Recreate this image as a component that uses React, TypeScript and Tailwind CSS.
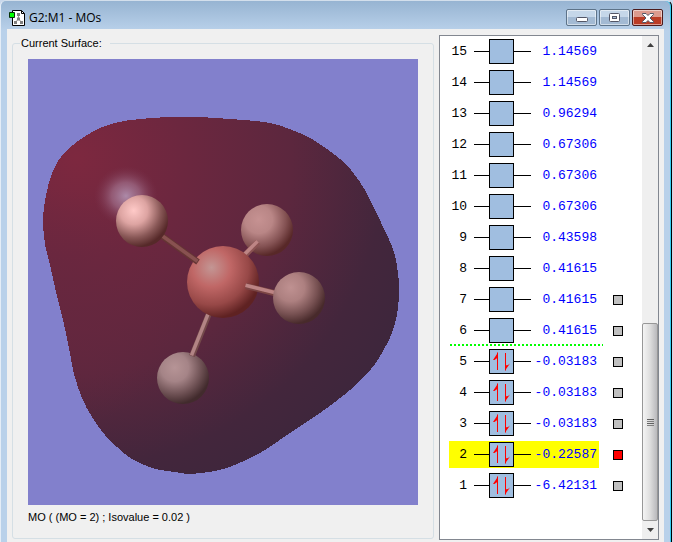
import { useState } from 'react';

type Orbital = {
  id: number;
  energy: string;
  occupied?: boolean;
  selectable?: boolean;
};

const ORBITALS: Orbital[] = [
  { id: 15, energy: '1.14569' },
  { id: 14, energy: '1.14569' },
  { id: 13, energy: '0.96294' },
  { id: 12, energy: '0.67306' },
  { id: 11, energy: '0.67306' },
  { id: 10, energy: '0.67306' },
  { id: 9, energy: '0.43598' },
  { id: 8, energy: '0.41615' },
  { id: 7, energy: '0.41615', selectable: true },
  { id: 6, energy: '0.41615', selectable: true },
  { id: 5, energy: '-0.03183', occupied: true, selectable: true },
  { id: 4, energy: '-0.03183', occupied: true, selectable: true },
  { id: 3, energy: '-0.03183', occupied: true, selectable: true },
  { id: 2, energy: '-0.22587', occupied: true, selectable: true },
  { id: 1, energy: '-6.42131', occupied: true, selectable: true },
];

const LUMO = 6;

// outline of the isosurface, clockwise from the top
const OUTLINE: [number, number][] = [
  [142, 58], [170, 58], [202, 60], [236, 63], [256, 68], [282, 79], [307, 96], [323, 111],
  [337, 131], [348, 153], [357, 172], [365, 190], [369, 207], [371, 224], [371, 237],
  [369, 256], [364, 274], [355, 292], [343, 310], [322, 331], [292, 354], [262, 374],
  [232, 394], [204, 407], [187, 412], [172, 414], [160, 415], [147, 413], [128, 410],
  [112, 404], [97, 395], [77, 376], [64, 358], [54, 339], [46, 315], [41, 289], [35, 261],
  [28, 233], [22, 206], [17, 185], [15, 160], [18, 136], [25, 112], [38, 92], [64, 73],
  [87, 64], [112, 60],
];

function smoothPath(pts: [number, number][]) {
  const n = pts.length;
  const at = (i: number) => pts[(i + n) % n];
  let d = `M${pts[0][0]} ${pts[0][1]}`;
  for (let i = 0; i < n; i++) {
    const [p0, p1, p2, p3] = [at(i - 1), at(i), at(i + 1), at(i + 2)];
    d += `C${p1[0] + (p2[0] - p0[0]) / 6} ${p1[1] + (p2[1] - p0[1]) / 6} `;
    d += `${p2[0] - (p3[0] - p1[0]) / 6} ${p2[1] - (p3[1] - p1[1]) / 6} ${p2[0]} ${p2[1]}`;
  }
  return d + 'Z';
}

function Ball({ id, cx, cy, r, stops }: { id: string; cx: number; cy: number; r: number; stops: string[] }) {
  return (
    <>
      <radialGradient id={id} cx="0.34" cy="0.3" r="0.74">
        <stop offset="0" stopColor={stops[0]} />
        <stop offset="0.36" stopColor={stops[1]} />
        <stop offset="0.7" stopColor={stops[2]} />
        <stop offset="0.95" stopColor={stops[3]} />
      </radialGradient>
      <circle cx={cx} cy={cy} r={r} fill={`url(#${id})`} />
    </>
  );
}

function Bond({ x1, y1, x2, y2, dark, light }: { x1: number; y1: number; x2: number; y2: number; dark: string; light: string }) {
  return (
    <g>
      <line x1={x1} y1={y1} x2={x2} y2={y2} stroke={dark} strokeWidth="6" />
      <line x1={x1 - 0.5} y1={y1 - 0.7} x2={x2 - 0.5} y2={y2 - 0.7} stroke={light} strokeWidth="3.6" />
    </g>
  );
}

function SurfaceView() {
  return (
    <svg viewBox="0 0 390 446" className="block w-full" role="img" aria-label="Molecular orbital">
      <defs>
        <radialGradient id="shade" gradientUnits="userSpaceOnUse" cx="48" cy="98" r="360">
          <stop offset="0" stopColor="#7d283f" />
          <stop offset="0.3" stopColor="#6c273f" />
          <stop offset="0.6" stopColor="#5c273e" />
          <stop offset="0.86" stopColor="#43263c" />
          <stop offset="1" stopColor="#3e263c" />
        </radialGradient>
        <radialGradient id="rim" gradientUnits="userSpaceOnUse" cx="30" cy="250" r="120">
          <stop offset="0" stopColor="#66273f" stopOpacity="0.7" />
          <stop offset="1" stopColor="#66273f" stopOpacity="0" />
        </radialGradient>
        <radialGradient id="glint">
          <stop offset="0" stopColor="#b395b4" stopOpacity="0.9" />
          <stop offset="0.45" stopColor="#a06f8b" stopOpacity="0.7" />
          <stop offset="1" stopColor="#7a3650" stopOpacity="0" />
        </radialGradient>
      </defs>
      <rect width="390" height="446" fill="#8280cc" />
      <path d={smoothPath(OUTLINE)} fill="url(#shade)" shapeRendering="crispEdges" />
      <path d={smoothPath(OUTLINE)} fill="url(#rim)" shapeRendering="crispEdges" />
      <ellipse cx="98" cy="137" rx="32" ry="30" fill="url(#glint)" />

      <Ball id="h2" cx={239} cy={171} r={26} stops={['#c69292', '#b98686', '#855354', '#582828']} />
      <Bond x1={212} y1={201} x2={230} y2={183} dark="#8b5353" light="#bd8585" />
      <Ball id="h4" cx={155} cy={319} r={26} stops={['#b69496', '#a58487', '#6d5053', '#422b2d']} />
      <Bond x1={182} y1={252} x2={164} y2={297} dark="#73494a" light="#b28485" />
      <Ball id="c" cx={195} cy={223} r={36} stops={['#c39694', '#c06766', '#974847', '#5f2222']} />
      <Bond x1={134} y1={177} x2={170} y2={203} dark="#653534" light="#885150" />
      <Bond x1={218} y1={227} x2={250} y2={235} dark="#7b4544" light="#bc8484" />
      <Ball id="h1" cx={114} cy={162} r={26} stops={['#ffcac8', '#dda4a2', '#895857', '#562929']} />
      <Ball id="h3" cx={271} cy={239} r={26} stops={['#bf9191', '#ad8080', '#765051', '#482a2b']} />
    </svg>
  );
}

function SpinPair() {
  return (
    <svg viewBox="0 0 23 23" className="h-[23px] w-[23px]" fill="#f00">
      <path d="M7 2.500H8V20H7Z" />
      <path d="M8 2.500V7.500L4.500 10H3Z" />
      <path d="M15 3H16V20.500H15Z" />
      <path d="M15 20.500V15.500L18 15L20 13.500Z" />
    </svg>
  );
}

function OrbitalRow({ orbital, selected, onSelect }: { orbital: Orbital; selected: boolean; onSelect: () => void }) {
  const { id, energy, occupied, selectable } = orbital;
  return (
    <li className="flex h-[31px] items-center pl-[9px]">
      <div className={`flex h-[27px] w-[150px] items-center ${selected ? 'bg-[#ffff00]' : ''}`}>
        <label htmlFor={selectable ? `mo-${id}` : undefined} className="w-[18px] text-right text-black">
          {id}
        </label>
        <span className="ml-[7px] h-px w-[15px] bg-black" />
        <span className="h-[25px] w-[25px] border border-black bg-[#a0bee0]">{occupied && <SpinPair />}</span>
        <span className="h-px w-[17px] bg-black" />
        <span className="flex-1 pr-[2px] text-right text-[#0000ff]">{energy}</span>
      </div>
      {selectable && (
        <input
          id={`mo-${id}`}
          type="checkbox"
          checked={selected}
          onChange={onSelect}
          className="ml-[14px] h-[10px] w-[10px] appearance-none border border-black bg-[#c0c0c0] checked:bg-[#ff0000]"
        />
      )}
    </li>
  );
}

function ScrollBar() {
  return (
    <div className="flex w-4 shrink-0 flex-col bg-[#efefef]">
      <button type="button" aria-label="Scroll up" className="flex h-[17px] items-center justify-center">
        <svg viewBox="0 0 7 4" className="h-1 w-[7px]" fill="#404040"><path d="M3.5 0L7 4H0Z" /></svg>
      </button>
      <div className="flex flex-1 flex-col justify-end">
        <div className="flex h-[198px] flex-col items-center justify-center gap-px rounded-[2px] border border-[#979797] bg-linear-to-r from-[#f4f4f4] via-[#dedede] to-[#b9b9bc]">
          <span className="h-px w-[7px] bg-[#606060]" />
          <span className="h-px w-[7px] bg-[#808080]" />
          <span className="h-px w-[7px] bg-[#606060]" />
          <span className="h-px w-[7px] bg-[#808080]" />
        </div>
      </div>
      <button type="button" aria-label="Scroll down" className="flex h-[18px] items-center justify-center">
        <svg viewBox="0 0 7 4" className="h-1 w-[7px]" fill="#404040"><path d="M0 0H7L3.5 4Z" /></svg>
      </button>
    </div>
  );
}

function TitleBar() {
  const button = 'flex h-[17px] w-[31px] items-center justify-center rounded-[2px] border shadow-[inset_0_0_0_1px_rgba(255,255,255,0.5)]';
  const plain = 'border-[#5d7389] bg-linear-to-b from-[#c5d7e9] from-50% to-[#a3bad3] to-50%';
  return (
    <header className="flex h-[28px] items-center pt-[5px] pr-[2px] pl-[2px]">
      <svg viewBox="0 0 16 16" className="h-4 w-4">
        <path d="M3.5 .5H12.5L15.5 3.5V15.5H3.5Z" fill="#fff" stroke="#000" />
        <path d="M12.5 .5V3.5H15.5" fill="none" stroke="#000" />
        <path d="M9.500 5V9L6.500 12M9.500 9L12.500 12" fill="none" stroke="#999" />
        <path d="M8 3H11V6H8ZM8 7.500H11V10.500H8ZM5 11H8V14H5ZM11 11H14V14H11Z" fill="#808080" />
        <path d="M.5 2.500H5.500V7.500H.5Z" fill="#0f0" stroke="#063006" />
      </svg>
      <h1 className="ml-[4px] flex-1 font-['Open_Sans','Noto_Sans',sans-serif] text-[12px] leading-4 text-black">G2:M1 - MOs</h1>
      <div className="flex gap-[2px]">
        <button type="button" aria-label="Minimize" className={`${button} ${plain}`}>
          <svg viewBox="0 0 12 5" className="mt-1 h-[5px] w-3"><rect x=".5" y=".5" width="11" height="4" rx="1" fill="#fff" stroke="#535666" /></svg>
        </button>
        <button type="button" aria-label="Maximize" className={`${button} ${plain}`}>
          <svg viewBox="0 0 11 9" className="h-[9px] w-[11px]">
            <rect x=".5" y=".5" width="10" height="8" rx="1" fill="#fff" stroke="#535666" />
            <rect x="3.500" y="3.500" width="4" height="2" fill="#a9bfd8" stroke="#535666" />
          </svg>
        </button>
        <button type="button" aria-label="Close" className={`${button} border-[#4b1a1c] bg-linear-to-b from-[#dc9a8e] from-45% to-[#bb3c26] to-50%`}>
          <svg viewBox="0 0 12 10" className="h-[10px] w-3">
            <path d="M.5 .5H4L6 2.500L8 .5H11.500V1.500L8 5L11.500 8.500V9.500H8L6 7.500L4 9.500H.5V8.500L4 5L.5 1.500Z" fill="#fff" stroke="#535666" />
          </svg>
        </button>
      </div>
    </header>
  );
}

export default function App() {
  const [selected, setSelected] = useState(2);

  return (
    <div className="min-h-screen bg-[#c9d8ec] pr-px font-['Liberation_Sans',sans-serif]">
      <div className="flex min-h-screen flex-col rounded-t-[6px] border-t border-r border-l border-t-[#d3dfec] border-r-black border-l-[#e4edf7] bg-[#bad2ea] bg-[linear-gradient(#97b4d2,#b9d1ea_30px)] pr-[6px] pl-[6px] shadow-[inset_-1px_0_0_#35cdf2]">
        <TitleBar />
        <main className="mr-px flex flex-1 bg-[#f0f0f0] pt-[6px] pr-[5px] pb-[2px] pl-[5px]">
          <fieldset className="mr-[5px] mb-px min-w-0 flex-1 rounded-[3px] border border-[#d5dfe5] px-[15px]">
            <legend className="-ml-[8px] pr-[8px] pl-px text-[11px] leading-4 text-black">Current Surface:</legend>
            <div className="mt-[8px]">
              <SurfaceView />
            </div>
            <p className="mt-[4px] text-[11px] leading-4 text-black">MO ( (MO = 2) ; Isovalue = 0.02 )</p>
          </fieldset>
          <section className="flex w-[220px] shrink-0 border border-[#828790] bg-white">
            <ul className="flex-1 font-['Liberation_Mono',monospace] text-[13px] leading-4">
              {ORBITALS.map((orbital) => [
                <OrbitalRow
                  key={orbital.id}
                  orbital={orbital}
                  selected={orbital.id === selected}
                  onSelect={() => setSelected(orbital.id)}
                />,
                // HOMO / LUMO divider
                orbital.id === LUMO && (
                  <li
                    key="gap"
                    aria-hidden
                    className="-mt-[2px] ml-[10px] h-[2px] w-[153px] bg-[repeating-linear-gradient(90deg,#0f0_0_2px,transparent_2px_4px)]"
                  />
                ),
              ])}
            </ul>
            <ScrollBar />
          </section>
        </main>
      </div>
    </div>
  );
}
